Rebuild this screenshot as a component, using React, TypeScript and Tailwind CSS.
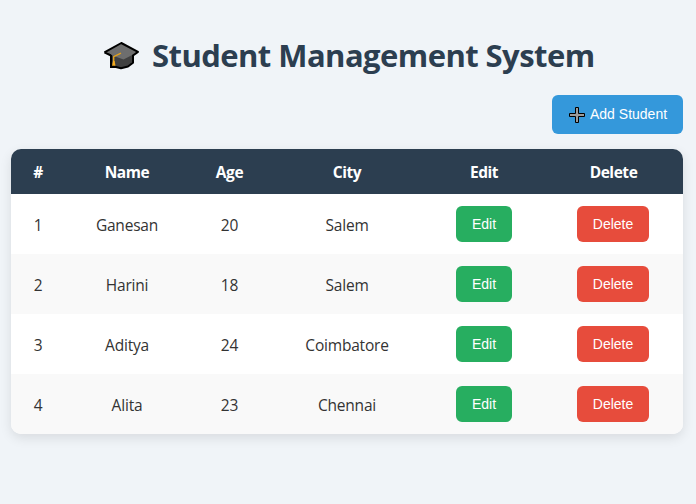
const students = [
  { name: 'Ganesan', age: 20, city: 'Salem' },
  { name: 'Harini', age: 18, city: 'Salem' },
  { name: 'Aditya', age: 24, city: 'Coimbatore' },
  { name: 'Alita', age: 23, city: 'Chennai' },
];

const columns = ['#', 'Name', 'Age', 'City', 'Edit', 'Delete'];

function GraduationCap() {
  return (
    <svg width="38" height="30" viewBox="0 0 38 30" className="shrink-0">
      <path d="M9 14v10.5l3 2 7 1.8 7-1.8 5-3.8V13z" fill="#404040" stroke="#000" strokeWidth="2" strokeLinejoin="round" />
      <path d="M19.3 3 36 11.9 21.5 19.4 2.4 12.4z" fill="#6e6e6e" />
      <path d="M2.4 12.4 19.3 3 36 11.9 31 15.5M9 15.5 2.4 12.4" fill="none" stroke="#000" strokeWidth="2" strokeLinejoin="round" />
      <path d="M9 15v12h6" fill="none" stroke="#000" strokeWidth="2" />
      <path d="M19 13.2 11.7 16.6v6" fill="none" stroke="#e2a11c" strokeWidth="1.4" />
      <path d="M11 21h1.6l.9 4.8h-3.5z" fill="#f2aa1f" />
    </svg>
  );
}

function PlusGlyph() {
  return (
    <svg width="16" height="16" viewBox="0 0 16 16" className="shrink-0">
      <path d="M6.5.5h3v6h6v3h-6v6h-3v-6h-6v-3h6z" fill="#9b9b9b" stroke="#000" />
    </svg>
  );
}

export default function App() {
  return (
    <div className="min-h-screen bg-[#f0f4f8] pl-[11px] pr-[13px] pt-[33px] font-['Open_Sans','Noto_Sans',sans-serif] text-[#333]">
      <h1 className="flex h-[44px] items-center pl-[91px] text-[31px] font-bold leading-[44px] text-[#2c3e50]">
        <GraduationCap />
        <span className="ml-[12px] whitespace-nowrap tracking-[-0.56px]">Student Management System</span>
      </h1>
      <div className="mt-[18px] flex justify-end">
        <button className="flex h-[39px] w-[131px] items-center rounded-[6px] bg-[#3498db] pl-[17px] font-['Liberation_Sans',Arial,sans-serif] text-[14px] text-white">
          <PlusGlyph />
          <span className="ml-[5px] whitespace-nowrap">Add Student</span>
        </button>
      </div>
      <div className="mt-[15px] overflow-hidden rounded-[10px] bg-white shadow-[0_4px_12px_rgba(0,0,0,0.1)]">
        <table className="w-full table-fixed border-collapse text-center">
          <colgroup>
            <col className="w-[54px]" />
            <col className="w-[124px]" />
            <col className="w-[81px]" />
            <col className="w-[154px]" />
            <col className="w-[120px]" />
            <col className="w-[139px]" />
          </colgroup>
          <thead>
            <tr className="h-[45px] bg-[#2c3e50] text-[15.5px] text-white">
              {columns.map((column) => (
                <th key={column} className="p-0 pt-[3px] font-bold tracking-[-0.45px]">{column}</th>
              ))}
            </tr>
          </thead>
          <tbody>
            {students.map((student, index) => (
              <tr key={student.name} className="h-[60px] bg-white text-[15.5px] tracking-[-0.2px] even:bg-[#f9f9f9]">
                <td className="p-0 pt-[4px]">{index + 1}</td>
                <td className="p-0 pt-[4px]">{student.name}</td>
                <td className="p-0 pt-[4px]">{student.age}</td>
                <td className="p-0 pt-[4px]">{student.city}</td>
                <td className="p-0">
                  <button className="mx-auto block h-[36px] w-[56px] rounded-[6px] bg-[#27ae60] font-['Liberation_Sans',Arial,sans-serif] text-[14px] tracking-normal text-white">Edit</button>
                </td>
                <td className="p-0 pr-px">
                  <button className="mx-auto block h-[36px] w-[72px] rounded-[6px] bg-[#e74c3c] font-['Liberation_Sans',Arial,sans-serif] text-[14px] tracking-normal text-white">Delete</button>
                </td>
              </tr>
            ))}
          </tbody>
        </table>
      </div>
    </div>
  );
}
